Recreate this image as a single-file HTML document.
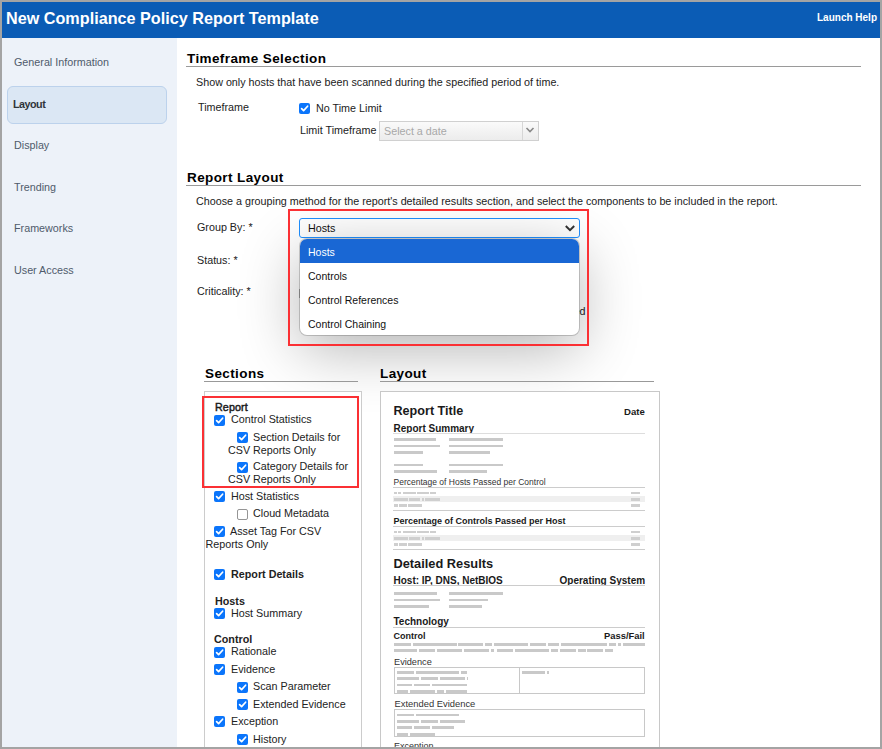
<!DOCTYPE html>
<html><head><meta charset="utf-8"><style>
html,body{margin:0;padding:0}
body{width:882px;height:749px;position:relative;overflow:hidden;background:#a4a4a4;font-family:"Liberation Sans",sans-serif}
.t{position:absolute;white-space:nowrap;line-height:1}
.r{position:absolute;box-sizing:content-box}
</style></head><body>
<div class="r" style="left:2px;top:2px;width:878px;height:36px;background:#0b5cb5"></div>
<div class="r" style="left:2px;top:38px;width:175px;height:709px;background:#edf2f9"></div>
<div class="r" style="left:177px;top:38px;width:703px;height:709px;background:#fff"></div>
<div class="t" style="left:6px;top:10px;font-size:16.2px;font-weight:bold;color:#fff;">New Compliance Policy Report Template</div>
<div class="t" style="left:817px;top:13px;font-size:10px;font-weight:bold;color:#fff;">Launch Help</div>
<div class="r" style="left:7px;top:86px;width:158px;height:36px;background:#dbe7f4;border:1px solid #bcd2ec;border-radius:6px"></div>
<div class="t" style="left:14px;top:57px;font-size:10.75px;font-weight:normal;color:#4f5b6b;">General Information</div>
<div class="t" style="left:13px;top:99px;font-size:10.75px;font-weight:bold;color:#30343a;letter-spacing:-0.5px">Layout</div>
<div class="t" style="left:14px;top:140px;font-size:10.75px;font-weight:normal;color:#4f5b6b;">Display</div>
<div class="t" style="left:14px;top:182px;font-size:10.75px;font-weight:normal;color:#4f5b6b;">Trending</div>
<div class="t" style="left:14px;top:223px;font-size:10.75px;font-weight:normal;color:#4f5b6b;">Frameworks</div>
<div class="t" style="left:14px;top:265px;font-size:10.75px;font-weight:normal;color:#4f5b6b;">User Access</div>
<div class="t" style="left:187px;top:52px;font-size:13.5px;font-weight:bold;color:#000;letter-spacing:0.4px">Timeframe Selection</div>
<div class="r" style="left:186px;top:66px;width:675px;height:1px;background:#9a9a9a"></div>
<div class="t" style="left:196px;top:77px;font-size:10.75px;font-weight:normal;color:#222;">Show only hosts that have been scanned during the specified period of time.</div>
<div class="t" style="left:198px;top:102px;font-size:10.75px;font-weight:normal;color:#222;">Timeframe</div>
<div class="r" style="left:299px;top:103px;width:11px;height:11px;background:#0b75fb;border-radius:2px"><svg width="11" height="11" viewBox="0 0 11 11" style="position:absolute;left:0;top:0"><path d="M2.6 5.6 L4.6 7.6 L8.6 3.2" fill="none" stroke="#fff" stroke-width="1.7" stroke-linecap="round" stroke-linejoin="round"/></svg></div>
<div class="t" style="left:316px;top:103px;font-size:10.75px;font-weight:normal;color:#222;">No Time Limit</div>
<div class="t" style="left:300px;top:125px;font-size:10.75px;font-weight:normal;color:#222;">Limit Timeframe</div>
<div class="r" style="left:379px;top:121px;width:158px;height:18px;background:linear-gradient(#fafafa,#ececec);border:1px solid #d0d0d0"></div>
<div class="t" style="left:384px;top:126px;font-size:10.75px;font-weight:normal;color:#a8a8a8;">Select a date</div>
<div class="r" style="left:522px;top:122px;width:1px;height:18px;background:#d6d6d6"></div>
<svg class="r" style="left:525px;top:126px" width="10" height="8" viewBox="0 0 10 8"><path d="M1.5 2 L5 5.5 L8.5 2" fill="none" stroke="#888" stroke-width="1.6"/></svg>
<div class="t" style="left:187px;top:171px;font-size:13.5px;font-weight:bold;color:#000;letter-spacing:0.4px">Report Layout</div>
<div class="r" style="left:186px;top:185px;width:675px;height:1px;background:#9a9a9a"></div>
<div class="t" style="left:196px;top:196px;font-size:10.75px;font-weight:normal;color:#222;">Choose a grouping method for the report's detailed results section, and select the components to be included in the report.</div>
<div class="t" style="left:197px;top:222px;font-size:10.75px;font-weight:normal;color:#222;">Group By: *</div>
<div class="t" style="left:197px;top:255px;font-size:10.75px;font-weight:normal;color:#222;">Status: *</div>
<div class="t" style="left:197px;top:286px;font-size:10.75px;font-weight:normal;color:#222;">Criticality: *</div>
<div class="t" style="left:573.5px;top:306px;font-size:10.75px;font-weight:normal;color:#222;">ed</div>
<div class="r" style="left:299px;top:218px;width:279px;height:18px;background:#fff;border:1px solid #1f8fff;border-radius:3px"></div>
<div class="t" style="left:308px;top:223px;font-size:10.75px;font-weight:normal;color:#111;">Hosts</div>
<svg class="r" style="left:564px;top:224px" width="12" height="9" viewBox="0 0 12 9"><path d="M1.8 2 L6 6.2 L10.2 2" fill="none" stroke="#333" stroke-width="2"/></svg>
<div class="r" style="left:300px;top:239px;width:279px;height:96px;background:#fff;border-radius:7px;box-shadow:0 0 0 1px rgba(0,0,0,0.18), 0 14px 60px rgba(0,0,0,0.3);overflow:hidden"><div style="position:absolute;left:0;top:0;width:279px;height:24px;background:#1967d4"></div></div>
<div class="t" style="left:308px;top:247px;font-size:10.5px;font-weight:normal;color:#fff;">Hosts</div>
<div class="t" style="left:308px;top:271px;font-size:10.5px;font-weight:normal;color:#111;">Controls</div>
<div class="t" style="left:308px;top:295px;font-size:10.5px;font-weight:normal;color:#111;">Control References</div>
<div class="t" style="left:308px;top:319px;font-size:10.5px;font-weight:normal;color:#111;">Control Chaining</div>
<div class="r" style="left:299px;top:289px;width:1px;height:9px;background:rgba(0,0,0,0.3)"></div>
<div class="r" style="left:288px;top:209px;width:297px;height:133px;border:2px solid #fb3034"></div>
<div class="t" style="left:205px;top:367px;font-size:13.5px;font-weight:bold;color:#000;letter-spacing:0.4px">Sections</div>
<div class="r" style="left:204px;top:381px;width:154px;height:1px;background:#999"></div>
<div class="r" style="left:204px;top:391px;width:156px;height:400px;border:1px solid #ccc;background:#fff"></div>
<div class="r" style="left:202px;top:396px;width:153px;height:88px;border:2px solid #fb3034"></div>
<div class="t" style="left:215px;top:401.5px;font-size:10.75px;font-weight:normal;color:#1a1a1a;-webkit-text-stroke:0.45px #1a1a1a;letter-spacing:0.1px">Report</div>
<div class="r" style="left:214px;top:415px;width:11px;height:11px;background:#0b75fb;border-radius:2px"><svg width="11" height="11" viewBox="0 0 11 11" style="position:absolute;left:0;top:0"><path d="M2.6 5.6 L4.6 7.6 L8.6 3.2" fill="none" stroke="#fff" stroke-width="1.7" stroke-linecap="round" stroke-linejoin="round"/></svg></div>
<div class="t" style="left:231px;top:414px;font-size:10.75px;font-weight:normal;color:#222;">Control Statistics</div>
<div class="r" style="left:237px;top:432px;width:11px;height:11px;background:#0b75fb;border-radius:2px"><svg width="11" height="11" viewBox="0 0 11 11" style="position:absolute;left:0;top:0"><path d="M2.6 5.6 L4.6 7.6 L8.6 3.2" fill="none" stroke="#fff" stroke-width="1.7" stroke-linecap="round" stroke-linejoin="round"/></svg></div>
<div class="t" style="left:253px;top:432px;font-size:10.75px;font-weight:normal;color:#222;">Section Details for</div>
<div class="t" style="left:228px;top:445px;font-size:10.75px;font-weight:normal;color:#222;">CSV Reports Only</div>
<div class="r" style="left:237px;top:462px;width:11px;height:11px;background:#0b75fb;border-radius:2px"><svg width="11" height="11" viewBox="0 0 11 11" style="position:absolute;left:0;top:0"><path d="M2.6 5.6 L4.6 7.6 L8.6 3.2" fill="none" stroke="#fff" stroke-width="1.7" stroke-linecap="round" stroke-linejoin="round"/></svg></div>
<div class="t" style="left:253px;top:461px;font-size:10.75px;font-weight:normal;color:#222;">Category Details for</div>
<div class="t" style="left:228px;top:473.5px;font-size:10.75px;font-weight:normal;color:#222;">CSV Reports Only</div>
<div class="r" style="left:214px;top:491px;width:11px;height:11px;background:#0b75fb;border-radius:2px"><svg width="11" height="11" viewBox="0 0 11 11" style="position:absolute;left:0;top:0"><path d="M2.6 5.6 L4.6 7.6 L8.6 3.2" fill="none" stroke="#fff" stroke-width="1.7" stroke-linecap="round" stroke-linejoin="round"/></svg></div>
<div class="t" style="left:231px;top:491px;font-size:10.75px;font-weight:normal;color:#222;">Host Statistics</div>
<div class="r" style="left:237px;top:509px;width:9px;height:9px;background:#fff;border:1px solid #959595;border-radius:2px"></div>
<div class="t" style="left:253px;top:508px;font-size:10.75px;font-weight:normal;color:#222;">Cloud Metadata</div>
<div class="r" style="left:214px;top:526px;width:11px;height:11px;background:#0b75fb;border-radius:2px"><svg width="11" height="11" viewBox="0 0 11 11" style="position:absolute;left:0;top:0"><path d="M2.6 5.6 L4.6 7.6 L8.6 3.2" fill="none" stroke="#fff" stroke-width="1.7" stroke-linecap="round" stroke-linejoin="round"/></svg></div>
<div class="t" style="left:230px;top:526px;font-size:10.75px;font-weight:normal;color:#222;">Asset Tag For CSV</div>
<div class="t" style="left:205.5px;top:539px;font-size:10.75px;font-weight:normal;color:#222;">Reports Only</div>
<div class="r" style="left:214px;top:569px;width:11px;height:11px;background:#0b75fb;border-radius:2px"><svg width="11" height="11" viewBox="0 0 11 11" style="position:absolute;left:0;top:0"><path d="M2.6 5.6 L4.6 7.6 L8.6 3.2" fill="none" stroke="#fff" stroke-width="1.7" stroke-linecap="round" stroke-linejoin="round"/></svg></div>
<div class="t" style="left:231px;top:568.5px;font-size:10.75px;font-weight:bold;color:#222;">Report Details</div>
<div class="t" style="left:215px;top:596px;font-size:10.75px;font-weight:bold;color:#222;">Hosts</div>
<div class="r" style="left:214px;top:608px;width:11px;height:11px;background:#0b75fb;border-radius:2px"><svg width="11" height="11" viewBox="0 0 11 11" style="position:absolute;left:0;top:0"><path d="M2.6 5.6 L4.6 7.6 L8.6 3.2" fill="none" stroke="#fff" stroke-width="1.7" stroke-linecap="round" stroke-linejoin="round"/></svg></div>
<div class="t" style="left:231px;top:608px;font-size:10.75px;font-weight:normal;color:#222;">Host Summary</div>
<div class="t" style="left:214px;top:634px;font-size:10.75px;font-weight:bold;color:#222;">Control</div>
<div class="r" style="left:214px;top:647px;width:11px;height:11px;background:#0b75fb;border-radius:2px"><svg width="11" height="11" viewBox="0 0 11 11" style="position:absolute;left:0;top:0"><path d="M2.6 5.6 L4.6 7.6 L8.6 3.2" fill="none" stroke="#fff" stroke-width="1.7" stroke-linecap="round" stroke-linejoin="round"/></svg></div>
<div class="t" style="left:231px;top:646px;font-size:10.75px;font-weight:normal;color:#222;">Rationale</div>
<div class="r" style="left:214px;top:664px;width:11px;height:11px;background:#0b75fb;border-radius:2px"><svg width="11" height="11" viewBox="0 0 11 11" style="position:absolute;left:0;top:0"><path d="M2.6 5.6 L4.6 7.6 L8.6 3.2" fill="none" stroke="#fff" stroke-width="1.7" stroke-linecap="round" stroke-linejoin="round"/></svg></div>
<div class="t" style="left:231px;top:664px;font-size:10.75px;font-weight:normal;color:#222;">Evidence</div>
<div class="r" style="left:237px;top:682px;width:11px;height:11px;background:#0b75fb;border-radius:2px"><svg width="11" height="11" viewBox="0 0 11 11" style="position:absolute;left:0;top:0"><path d="M2.6 5.6 L4.6 7.6 L8.6 3.2" fill="none" stroke="#fff" stroke-width="1.7" stroke-linecap="round" stroke-linejoin="round"/></svg></div>
<div class="t" style="left:253px;top:681px;font-size:10.75px;font-weight:normal;color:#222;">Scan Parameter</div>
<div class="r" style="left:237px;top:699px;width:11px;height:11px;background:#0b75fb;border-radius:2px"><svg width="11" height="11" viewBox="0 0 11 11" style="position:absolute;left:0;top:0"><path d="M2.6 5.6 L4.6 7.6 L8.6 3.2" fill="none" stroke="#fff" stroke-width="1.7" stroke-linecap="round" stroke-linejoin="round"/></svg></div>
<div class="t" style="left:253px;top:699px;font-size:10.75px;font-weight:normal;color:#222;">Extended Evidence</div>
<div class="r" style="left:214px;top:716px;width:11px;height:11px;background:#0b75fb;border-radius:2px"><svg width="11" height="11" viewBox="0 0 11 11" style="position:absolute;left:0;top:0"><path d="M2.6 5.6 L4.6 7.6 L8.6 3.2" fill="none" stroke="#fff" stroke-width="1.7" stroke-linecap="round" stroke-linejoin="round"/></svg></div>
<div class="t" style="left:231px;top:716px;font-size:10.75px;font-weight:normal;color:#222;">Exception</div>
<div class="r" style="left:237px;top:734px;width:11px;height:11px;background:#0b75fb;border-radius:2px"><svg width="11" height="11" viewBox="0 0 11 11" style="position:absolute;left:0;top:0"><path d="M2.6 5.6 L4.6 7.6 L8.6 3.2" fill="none" stroke="#fff" stroke-width="1.7" stroke-linecap="round" stroke-linejoin="round"/></svg></div>
<div class="t" style="left:253px;top:734px;font-size:10.75px;font-weight:normal;color:#222;">History</div>
<div class="t" style="left:380px;top:367px;font-size:13.5px;font-weight:bold;color:#000;letter-spacing:0.4px">Layout</div>
<div class="r" style="left:380px;top:381px;width:274px;height:1px;background:#999"></div>
<div class="r" style="left:380px;top:391px;width:278px;height:400px;border:1px solid #c8c8c8;background:#fff"></div>
<div class="t" style="left:393.5px;top:405px;font-size:12.6px;font-weight:bold;color:#1a1a1a;">Report Title</div>
<div class="t" style="left:624px;top:407px;font-size:9.6px;font-weight:bold;color:#1a1a1a;">Date</div>
<div class="t" style="left:393.5px;top:424px;font-size:10px;font-weight:bold;color:#1a1a1a;">Report Summary</div>
<div class="r" style="left:393px;top:433px;width:252px;height:1px;background:#ddd"></div>
<div class="r" style="left:393.5px;top:438px;width:42.5px;height:2.5px;background:#c9c9c9"></div>
<div class="r" style="left:448.5px;top:438px;width:54.5px;height:2.5px;background:#c9c9c9"></div>
<div class="r" style="left:393.5px;top:444.5px;width:46.5px;height:2.5px;background:#c9c9c9"></div>
<div class="r" style="left:448.5px;top:444.5px;width:54.5px;height:2.5px;background:#c9c9c9"></div>
<div class="r" style="left:393.5px;top:451px;width:29.0px;height:2.5px;background:#c9c9c9"></div>
<div class="r" style="left:448.5px;top:451px;width:41.5px;height:2.5px;background:#c9c9c9"></div>
<div class="r" style="left:393.5px;top:463.5px;width:29.0px;height:2.5px;background:#c9c9c9"></div>
<div class="r" style="left:448.5px;top:463.5px;width:54.5px;height:2.5px;background:#c9c9c9"></div>
<div class="r" style="left:393.5px;top:470px;width:43.0px;height:2.5px;background:#c9c9c9"></div>
<div class="r" style="left:448.5px;top:470px;width:38.5px;height:2.5px;background:#c9c9c9"></div>
<div class="t" style="left:393.5px;top:477.5px;font-size:8.5px;font-weight:normal;color:#333;">Percentage of Hosts Passed per Control</div>
<div class="r" style="left:393px;top:487px;width:252px;height:1px;background:#ccc"></div>
<div class="r" style="left:393px;top:496px;width:252px;height:6px;background:#efefef"></div>
<div class="r" style="left:393.5px;top:491.5px;width:3.5px;height:2.5px;background:#cfcfcf"></div>
<div class="r" style="left:398px;top:491.5px;width:3px;height:2.5px;background:#cfcfcf"></div>
<div class="r" style="left:403px;top:491.5px;width:13px;height:2.5px;background:#cfcfcf"></div>
<div class="r" style="left:417px;top:491.5px;width:11.5px;height:2.5px;background:#cfcfcf"></div>
<div class="r" style="left:430px;top:491.5px;width:6px;height:2.5px;background:#cfcfcf"></div>
<div class="r" style="left:631px;top:491.5px;width:9px;height:2.5px;background:#cfcfcf"></div>
<div class="r" style="left:393.5px;top:498px;width:14.5px;height:2.5px;background:#cfcfcf"></div>
<div class="r" style="left:409px;top:498px;width:11px;height:2.5px;background:#cfcfcf"></div>
<div class="r" style="left:422px;top:498px;width:2px;height:2.5px;background:#cfcfcf"></div>
<div class="r" style="left:425px;top:498px;width:15px;height:2.5px;background:#cfcfcf"></div>
<div class="r" style="left:631px;top:498px;width:9px;height:2.5px;background:#cfcfcf"></div>
<div class="r" style="left:393.5px;top:504.2px;width:4.5px;height:2.5px;background:#cfcfcf"></div>
<div class="r" style="left:399px;top:504.2px;width:8px;height:2.5px;background:#cfcfcf"></div>
<div class="r" style="left:408px;top:504.2px;width:14px;height:2.5px;background:#cfcfcf"></div>
<div class="r" style="left:631px;top:504.2px;width:9px;height:2.5px;background:#cfcfcf"></div>
<div class="r" style="left:393px;top:510px;width:252px;height:1px;background:#ccc"></div>
<div class="t" style="left:393.5px;top:516.5px;font-size:9px;font-weight:bold;color:#1a1a1a;">Percentage of Controls Passed per Host</div>
<div class="r" style="left:393px;top:526px;width:252px;height:1px;background:#ccc"></div>
<div class="r" style="left:393px;top:535px;width:252px;height:6px;background:#efefef"></div>
<div class="r" style="left:393.5px;top:530.5px;width:3.5px;height:2.5px;background:#cfcfcf"></div>
<div class="r" style="left:398px;top:530.5px;width:3px;height:2.5px;background:#cfcfcf"></div>
<div class="r" style="left:403px;top:530.5px;width:13px;height:2.5px;background:#cfcfcf"></div>
<div class="r" style="left:417px;top:530.5px;width:11.5px;height:2.5px;background:#cfcfcf"></div>
<div class="r" style="left:430px;top:530.5px;width:6px;height:2.5px;background:#cfcfcf"></div>
<div class="r" style="left:631px;top:530.5px;width:9px;height:2.5px;background:#cfcfcf"></div>
<div class="r" style="left:393.5px;top:537px;width:14.5px;height:2.5px;background:#cfcfcf"></div>
<div class="r" style="left:409px;top:537px;width:11px;height:2.5px;background:#cfcfcf"></div>
<div class="r" style="left:422px;top:537px;width:2px;height:2.5px;background:#cfcfcf"></div>
<div class="r" style="left:425px;top:537px;width:15px;height:2.5px;background:#cfcfcf"></div>
<div class="r" style="left:631px;top:537px;width:9px;height:2.5px;background:#cfcfcf"></div>
<div class="r" style="left:393.5px;top:543.2px;width:4.5px;height:2.5px;background:#cfcfcf"></div>
<div class="r" style="left:399px;top:543.2px;width:8px;height:2.5px;background:#cfcfcf"></div>
<div class="r" style="left:408px;top:543.2px;width:14px;height:2.5px;background:#cfcfcf"></div>
<div class="r" style="left:631px;top:543.2px;width:9px;height:2.5px;background:#cfcfcf"></div>
<div class="r" style="left:393px;top:549px;width:252px;height:1px;background:#ccc"></div>
<div class="t" style="left:393.5px;top:558px;font-size:12.8px;font-weight:bold;color:#1a1a1a;">Detailed Results</div>
<div class="t" style="left:393.5px;top:575.5px;font-size:10px;font-weight:bold;color:#1a1a1a;">Host: IP, DNS, NetBIOS</div>
<div class="t" style="left:559.5px;top:575.5px;font-size:10px;font-weight:bold;color:#1a1a1a;">Operating System</div>
<div class="r" style="left:393px;top:585px;width:252px;height:1px;background:#ccc"></div>
<div class="r" style="left:393.5px;top:592px;width:43.0px;height:2.5px;background:#c9c9c9"></div>
<div class="r" style="left:448.5px;top:592px;width:54.5px;height:2.5px;background:#c9c9c9"></div>
<div class="r" style="left:393.5px;top:598.5px;width:46.5px;height:2.5px;background:#c9c9c9"></div>
<div class="r" style="left:448.5px;top:598.5px;width:39.5px;height:2.5px;background:#c9c9c9"></div>
<div class="r" style="left:393.5px;top:605px;width:35.5px;height:2.5px;background:#c9c9c9"></div>
<div class="r" style="left:448.5px;top:605px;width:33.5px;height:2.5px;background:#c9c9c9"></div>
<div class="t" style="left:393.5px;top:617px;font-size:10px;font-weight:bold;color:#1a1a1a;">Technology</div>
<div class="r" style="left:393px;top:626.5px;width:252px;height:1px;background:#ccc"></div>
<div class="t" style="left:393.5px;top:632px;font-size:9px;font-weight:bold;color:#1a1a1a;">Control</div>
<div class="t" style="left:604px;top:631px;font-size:9.4px;font-weight:bold;color:#1a1a1a;">Pass/Fail</div>
<div class="r" style="left:394.4px;top:643px;width:17.0px;height:2.6px;background:#c9c9c9"></div>
<div class="r" style="left:413.3px;top:643px;width:43.30000000000001px;height:2.6px;background:#c9c9c9"></div>
<div class="r" style="left:458.4px;top:643px;width:25.100000000000023px;height:2.6px;background:#c9c9c9"></div>
<div class="r" style="left:485.3px;top:643px;width:7.099999999999966px;height:2.6px;background:#c9c9c9"></div>
<div class="r" style="left:494.4px;top:643px;width:34.10000000000002px;height:2.6px;background:#c9c9c9"></div>
<div class="r" style="left:530.3px;top:643px;width:16.200000000000045px;height:2.6px;background:#c9c9c9"></div>
<div class="r" style="left:548.2px;top:643px;width:10.799999999999955px;height:2.6px;background:#c9c9c9"></div>
<div class="r" style="left:561px;top:643px;width:46px;height:2.6px;background:#c9c9c9"></div>
<div class="r" style="left:608.7px;top:643px;width:7.099999999999909px;height:2.6px;background:#c9c9c9"></div>
<div class="r" style="left:618px;top:643px;width:3px;height:2.6px;background:#c9c9c9"></div>
<div class="r" style="left:623px;top:643px;width:21.600000000000023px;height:2.6px;background:#c9c9c9"></div>
<div class="r" style="left:394.4px;top:649.3px;width:22.400000000000034px;height:2.6px;background:#c9c9c9"></div>
<div class="r" style="left:418.9px;top:649.3px;width:15.900000000000034px;height:2.6px;background:#c9c9c9"></div>
<div class="r" style="left:437px;top:649.3px;width:25px;height:2.6px;background:#c9c9c9"></div>
<div class="r" style="left:463.8px;top:649.3px;width:25.0px;height:2.6px;background:#c9c9c9"></div>
<div class="r" style="left:491px;top:649.3px;width:3.3999999999999773px;height:2.6px;background:#c9c9c9"></div>
<div class="r" style="left:496.8px;top:649.3px;width:16.499999999999943px;height:2.6px;background:#c9c9c9"></div>
<div class="r" style="left:515px;top:649.3px;width:34px;height:2.6px;background:#c9c9c9"></div>
<div class="r" style="left:551px;top:649.3px;width:7.2000000000000455px;height:2.6px;background:#c9c9c9"></div>
<div class="r" style="left:560px;top:649.3px;width:16px;height:2.6px;background:#c9c9c9"></div>
<div class="r" style="left:578px;top:649.3px;width:7.5px;height:2.6px;background:#c9c9c9"></div>
<div class="r" style="left:587px;top:649.3px;width:16px;height:2.6px;background:#c9c9c9"></div>
<div class="r" style="left:605px;top:649.3px;width:8px;height:2.6px;background:#c9c9c9"></div>
<div class="t" style="left:394px;top:657.8px;font-size:9.2px;font-weight:normal;color:#333;">Evidence</div>
<div class="r" style="left:394px;top:667px;width:249px;height:25px;border:1px solid #c8c8c8"></div>
<div class="r" style="left:519px;top:667px;width:1px;height:26px;background:#c8c8c8"></div>
<div class="r" style="left:397.1px;top:671px;width:17.099999999999966px;height:2.6px;background:#c9c9c9"></div>
<div class="r" style="left:416px;top:671px;width:43px;height:2.6px;background:#c9c9c9"></div>
<div class="r" style="left:461px;top:671px;width:6px;height:2.6px;background:#c9c9c9"></div>
<div class="r" style="left:397.1px;top:677.4px;width:22.399999999999977px;height:2.6px;background:#c9c9c9"></div>
<div class="r" style="left:421.4px;top:677.4px;width:16.30000000000001px;height:2.6px;background:#c9c9c9"></div>
<div class="r" style="left:439.5px;top:677.4px;width:25.100000000000023px;height:2.6px;background:#c9c9c9"></div>
<div class="r" style="left:466.5px;top:677.4px;width:1.0px;height:2.6px;background:#c9c9c9"></div>
<div class="r" style="left:397.1px;top:683.6px;width:15.299999999999955px;height:2.6px;background:#c9c9c9"></div>
<div class="r" style="left:414.3px;top:683.6px;width:16.099999999999966px;height:2.6px;background:#c9c9c9"></div>
<div class="r" style="left:432.2px;top:683.6px;width:34.80000000000001px;height:2.6px;background:#c9c9c9"></div>
<div class="r" style="left:397.1px;top:690px;width:10.699999999999989px;height:2.6px;background:#c9c9c9"></div>
<div class="r" style="left:410px;top:690px;width:25px;height:2.6px;background:#c9c9c9"></div>
<div class="r" style="left:437px;top:690px;width:7.199999999999989px;height:2.6px;background:#c9c9c9"></div>
<div class="r" style="left:446px;top:690px;width:21px;height:2.6px;background:#c9c9c9"></div>
<div class="r" style="left:522.2px;top:671.4px;width:22.59999999999991px;height:2.6px;background:#c9c9c9"></div>
<div class="r" style="left:546.7px;top:671.4px;width:2.0px;height:2.6px;background:#c9c9c9"></div>
<div class="t" style="left:394.5px;top:699px;font-size:9.4px;font-weight:normal;color:#333;">Extended Evidence</div>
<div class="r" style="left:394px;top:709px;width:249px;height:26px;border:1px solid #c8c8c8"></div>
<div class="r" style="left:397.1px;top:713.7px;width:17.099999999999966px;height:2.6px;background:#c9c9c9"></div>
<div class="r" style="left:416px;top:713.7px;width:43px;height:2.6px;background:#c9c9c9"></div>
<div class="r" style="left:397.1px;top:720.4px;width:22.399999999999977px;height:2.6px;background:#c9c9c9"></div>
<div class="r" style="left:421.4px;top:720.4px;width:16.30000000000001px;height:2.6px;background:#c9c9c9"></div>
<div class="r" style="left:439.5px;top:720.4px;width:25.30000000000001px;height:2.6px;background:#c9c9c9"></div>
<div class="r" style="left:397.1px;top:726.4px;width:15.299999999999955px;height:2.6px;background:#c9c9c9"></div>
<div class="r" style="left:414.3px;top:726.4px;width:16.099999999999966px;height:2.6px;background:#c9c9c9"></div>
<div class="r" style="left:432.2px;top:726.4px;width:21.80000000000001px;height:2.6px;background:#c9c9c9"></div>
<div class="r" style="left:397.1px;top:733px;width:10.899999999999977px;height:2.6px;background:#c9c9c9"></div>
<div class="r" style="left:410px;top:733px;width:25px;height:2.6px;background:#c9c9c9"></div>
<div class="t" style="left:394px;top:742px;font-size:9px;font-weight:normal;color:#333;">Exception</div>
<div class="r" style="left:0px;top:747px;width:882px;height:2px;background:#a4a4a4"></div>
</body></html>
